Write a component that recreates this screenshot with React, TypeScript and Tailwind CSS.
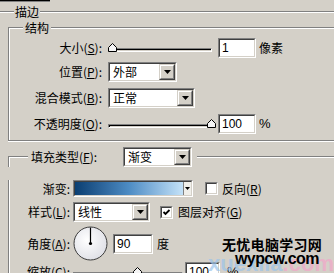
import React from "react";

function Mn({ children }: { children: React.ReactNode }) {
  return <span className="underline underline-offset-[1px]">{children}</span>;
}

function Arrow({ small }: { small?: boolean }) {
  return small ? (
    <svg width="5" height="3" viewBox="0 0 5 3">
      <path d="M0 0H5L2.5 3Z" fill="#000" />
    </svg>
  ) : (
    <svg width="7" height="4" viewBox="0 0 7 4">
      <path d="M0 0H7L3.5 4Z" fill="#000" />
    </svg>
  );
}

function Sunken({ className, children, inner }: { className: string; children?: React.ReactNode; inner?: string }) {
  return (
    <div className={`border border-t-[#808080] border-l-[#808080] border-b-white border-r-white ${className}`}>
      <div
        className={`flex h-full w-full border border-t-[#404040] border-l-[#404040] border-b-[#d4d0c8] border-r-[#d4d0c8] bg-white ${inner ?? ""}`}
      >
        {children}
      </div>
    </div>
  );
}

function Dropdown({ w, text }: { w: string; text: string }) {
  return (
    <Sunken className={`h-[20px] ${w}`}>
      <span className="flex-1 pl-[3px] leading-[16px]">{text}</span>
      <div className="h-full w-[16px] border border-t-[#d4d0c8] border-l-[#d4d0c8] border-b-[#404040] border-r-[#404040] bg-[#d4d0c8]">
        <div className="flex h-full w-full items-center justify-center border border-t-white border-l-white border-b-[#808080] border-r-[#808080]">
          <Arrow />
        </div>
      </div>
    </Sunken>
  );
}

function NumInput({ w, value }: { w: string; value: string }) {
  return (
    <Sunken className={`h-[20px] ${w}`}>
      <span className="pl-[2px] font-['Liberation_Sans',sans-serif] text-[12px] leading-[16px]">{value}</span>
    </Sunken>
  );
}

function Slider({ w, left }: { w: string; left: number }) {
  return (
    <div className={`relative flex h-[20px] flex-col pt-[10px] ${w}`}>
      <div className="h-[4px] w-full border border-t-[#808080] border-l-[#808080] border-b-white border-r-white bg-[#d4d0c8] shadow-[inset_1px_1px_0_#000]" />
      <svg className="absolute top-[5px]" style={{ left }} width="9" height="9" viewBox="0 0 9 9">
        <path d="M0.5 8.5V4.5L4.5 0.5L8.5 4.5V8.5Z" fill="#f4f4f4" stroke="#000" strokeWidth="1" />
      </svg>
    </div>
  );
}

function Check({ checked }: { checked?: boolean }) {
  return (
    <Sunken className="h-[13px] w-[13px]">
      {checked && (
        <svg width="9" height="9" viewBox="0 0 9 9">
          <path d="M1.5 4L3.5 6L7.5 2" fill="none" stroke="#000" strokeWidth="1.8" />
        </svg>
      )}
    </Sunken>
  );
}

function Line({ className }: { className?: string }) {
  return <div className={`h-[2px] flex-1 border-t border-[#808080] bg-white ${className ?? ""}`} />;
}

function Row1({ label, children, mt }: { label: React.ReactNode; children: React.ReactNode; mt: string }) {
  return (
    <div className={`flex h-[20px] items-center ${mt}`}>
      <span className="w-[93px] whitespace-nowrap text-right leading-[20px]">{label}</span>
      <div className="ml-[6px] flex items-center">{children}</div>
    </div>
  );
}

function Row2({ label, children, mt, h }: { label: React.ReactNode; children: React.ReactNode; mt: string; h: string }) {
  return (
    <div className={`flex items-center ${mt} ${h}`}>
      <span className="w-[61px] whitespace-nowrap text-right leading-[20px]">{label}</span>
      <div className="ml-[3px] flex items-center">{children}</div>
    </div>
  );
}

export default function App() {
  return (
    <div className="relative h-[273px] w-[334px] overflow-hidden bg-[#d4d0c8] font-['Noto_Sans_CJK_SC','Noto_Sans',sans-serif] text-[12px] text-black">
      {/* tab remnant */}
      <div className="h-[2px] w-[50px] border-t border-black bg-[#808080]" />

      {/* 描边 heading */}
      <div className="mt-[2px] flex h-[16px] items-center">
        <div className="h-[2px] w-[14px] border-t border-[#808080] bg-white" />
        <span className="px-[1px] leading-[16px]">描边</span>
        <Line />
      </div>

      {/* 结构 group */}
      <div className="ml-[8px]">
        <div className="flex h-[16px] items-center">
          <div className="h-[9px] w-[15px] self-end border-l border-t border-[#808080] shadow-[inset_1px_1px_0_#fff]" />
          <span className="px-[2px] leading-[16px]">结构</span>
          <Line />
        </div>
        <div className="h-[105px] border-b border-l border-[#808080] pt-[2px] shadow-[inset_1px_0_0_#fff,0_1px_0_#fff]">
          <Row1 mt="" label={<>大小(<Mn>S</Mn>):</>}>
            <Slider w="w-[104px]" left={0} />
            <NumInput w="ml-[6px] w-[38px]" value="1" />
            <span className="ml-[3px] leading-[20px]">像素</span>
          </Row1>
          <Row1 mt="mt-[4px]" label={<>位置(<Mn>P</Mn>):</>}>
            <Dropdown w="w-[69px]" text="外部" />
          </Row1>
          <Row1 mt="mt-[6px]" label={<>混合模式(<Mn>B</Mn>):</>}>
            <Dropdown w="w-[87px]" text="正常" />
          </Row1>
          <Row1 mt="mt-[6px]" label={<>不透明度(<Mn>O</Mn>):</>}>
            <Slider w="w-[104px]" left={99} />
            <NumInput w="ml-[6px] w-[38px]" value="100" />
            <span className="ml-[3px] font-['Liberation_Sans',sans-serif] text-[13px] leading-[20px]">%</span>
          </Row1>
        </div>
      </div>

      {/* 填充 group */}
      <div className="ml-[8px] mt-[6px]">
        <div className="flex h-[20px] items-center">
          <div className="h-[11px] w-[20px] self-end border-l border-t border-[#808080] shadow-[inset_1px_1px_0_#fff]" />
          <span className="w-[95px] whitespace-nowrap pl-[3px] leading-[20px]">
            填充类型(<Mn>F</Mn>):
          </span>
          <Dropdown w="w-[69px]" text="渐变" />
          <Line className="ml-[5px]" />
        </div>
        <div className="h-[200px] border-l border-[#808080] shadow-[inset_1px_0_0_#fff]">
          <Row2 mt="mt-[13px]" h="h-[17px]" label="渐变:">
            <Sunken className="h-[17px] w-[120px]">
              <div className="h-full flex-1 bg-gradient-to-r from-[#0a3f72] via-[#4d8cc4] to-[#c4e2f8]" />
              <div className="flex h-full w-[8px] items-center justify-center border-l border-[#808080] bg-[#f0efea]">
                <Arrow small />
              </div>
            </Sunken>
            <div className="ml-[12px]">
              <Check />
            </div>
            <span className="ml-[4px] leading-[20px]">
              反向(<Mn>R</Mn>)
            </span>
          </Row2>
          <Row2 mt="mt-[5px]" h="h-[20px]" label={<>样式(<Mn>L</Mn>):</>}>
            <Dropdown w="w-[77px]" text="线性" />
            <div className="ml-[10px]">
              <Check checked />
            </div>
            <span className="ml-[5px] leading-[20px]">
              图层对齐(<Mn>G</Mn>)
            </span>
          </Row2>
          <Row2 mt="mt-[4px]" h="h-[35px]" label={<>角度(<Mn>A</Mn>):</>}>
            <svg width="35" height="35" viewBox="0 0 35 35">
              <defs>
                <radialGradient id="dialg" cx="0.4" cy="0.4" r="0.7">
                  <stop offset="0" stopColor="#ffffff" />
                  <stop offset="1" stopColor="#dcdde4" />
                </radialGradient>
              </defs>
              <circle cx="17.5" cy="17.5" r="16.5" fill="url(#dialg)" stroke="#3c3c3c" strokeWidth="1" />
              <path d="M17.5 1.5V17.5" stroke="#000" strokeWidth="1.2" />
              <circle cx="17.5" cy="17.5" r="1.6" fill="#000" />
            </svg>
            <NumInput w="ml-[5px] w-[40px]" value="90" />
            <span className="ml-[4px] leading-[20px]">度</span>
          </Row2>
          <Row2 mt="mt-[1px]" h="h-[20px]" label={<>缩放(<Mn>C</Mn>):</>}>
            <Slider w="w-[110px]" left={60} />
            <NumInput w="ml-[2px] w-[35px]" value="100" />
            <span className="ml-[7px] font-['Liberation_Sans',sans-serif] text-[13px] leading-[20px]">%</span>
          </Row2>
        </div>
      </div>

      {/* watermark overlay */}
      <div className="pointer-events-none absolute left-[208px] top-[252px] whitespace-nowrap font-['Liberation_Sans',sans-serif] text-[22px] font-bold leading-[24px] opacity-70">
        <span className="text-[#9cc4ea]">xuexila</span>
        <span className="text-[#f2a6c8]">.com</span>
      </div>
      <div className="pointer-events-none absolute left-[222px] top-[236px] whitespace-nowrap font-['Noto_Sans_CJK_SC',sans-serif] text-[14px] font-bold leading-[16px] tracking-[0.3px] text-black">
        无忧电脑学习网
      </div>
      <div className="pointer-events-none absolute left-[235px] top-[251px] whitespace-nowrap font-['Liberation_Sans',sans-serif] text-[16px] font-bold leading-[16px] tracking-[-0.6px] text-black">
        wypcw.com
      </div>
    </div>
  );
}
